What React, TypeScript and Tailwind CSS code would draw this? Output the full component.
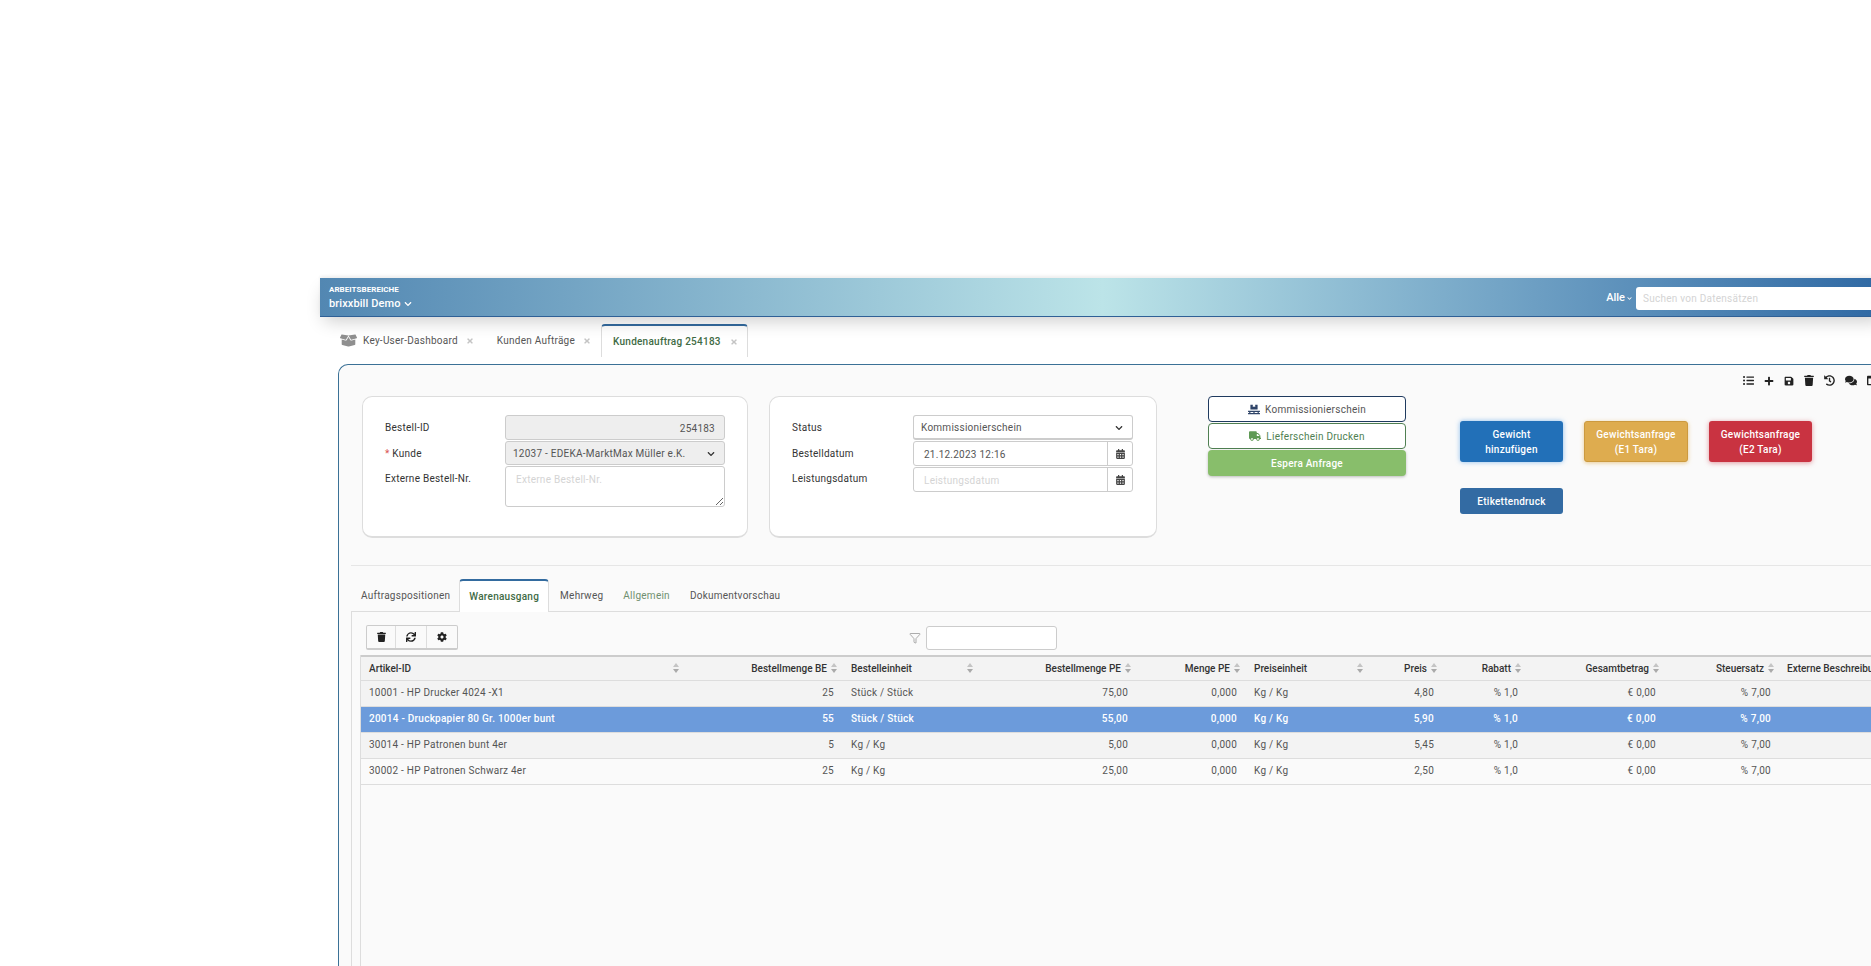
import React from 'react';
import { FaBoxOpen, FaCalendarAlt, FaChevronDown, FaCog, FaColumns, FaComments, FaHistory, FaListUl, FaPallet, FaPlus, FaSave, FaSync, FaTimes, FaTrash, FaTruck } from 'react-icons/fa';
import { Filter } from 'lucide-react';

const columns = [
  { label: 'Artikel-ID', width: 'w-[325px]', right: false },
  { label: 'Bestellmenge BE', width: 'w-[157px]', right: true },
  { label: 'Bestelleinheit', width: 'w-[137px]', right: false },
  { label: 'Bestellmenge PE', width: 'w-[157px]', right: true },
  { label: 'Menge PE', width: 'w-[109px]', right: true },
  { label: 'Preiseinheit', width: 'w-[124px]', right: false },
  { label: 'Preis', width: 'w-[73px]', right: true },
  { label: 'Rabatt', width: 'w-[84px]', right: true },
  { label: 'Gesamtbetrag', width: 'w-[138px]', right: true },
  { label: 'Steuersatz', width: 'w-[115px]', right: true },
];

const rows = [
  ['10001 - HP Drucker 4024 -X1', '25', 'Stück / Stück', '75,00', '0,000', 'Kg / Kg', '4,80', '% 1,0', '€ 0,00', '% 7,00'],
  ['20014 - Druckpapier 80 Gr. 1000er bunt', '55', 'Stück / Stück', '55,00', '0,000', 'Kg / Kg', '5,90', '% 1,0', '€ 0,00', '% 7,00'],
  ['30014 - HP Patronen bunt 4er', '5', 'Kg / Kg', '5,00', '0,000', 'Kg / Kg', '5,45', '% 1,0', '€ 0,00', '% 7,00'],
  ['30002 - HP Patronen Schwarz 4er', '25', 'Kg / Kg', '25,00', '0,000', 'Kg / Kg', '2,50', '% 1,0', '€ 0,00', '% 7,00'],
];

const rowStyles = [
  'bg-[#f3f3f3] text-[#555555]',
  'bg-[#6c9bdb] text-white font-medium',
  'bg-[#f3f3f3] text-[#555555]',
  'bg-[#fafafa] text-[#555555]',
];

function SortIcon() {
  return (
    <svg className="w-[6px] h-[10px] shrink-0" viewBox="0 0 6 10">
      <path d="M3 0L6 4H0z" fill="#c4c4c4" />
      <path d="M3 10L6 6H0z" fill="#aaaaaa" />
    </svg>
  );
}

function CloseX() {
  return <FaTimes className="w-[8px] h-[8px] text-[#c4c4c4]" />;
}

function Label({ children }: { children: React.ReactNode }) {
  return <div className="h-[25.5px] leading-[26px] text-[#333333]">{children}</div>;
}

export default function App() {
  return (
    <div className="h-[966px] w-full overflow-hidden bg-white pt-[278px] pl-[320px] text-[10px] tracking-[0.25px] [font-family:Roboto,sans-serif]">
      <div className="w-[1566px]">
        {/* top bar */}
        <header className="relative z-10 h-[39px] pt-[1px] flex items-center justify-between pl-[9px] border-b border-[#2f6096] text-white bg-gradient-to-r from-[#5287b2] via-[#bce4e8] to-[#2e68a3] shadow-[0_8px_18px_-4px_rgba(0,0,0,0.2),0_-2px_3px_rgba(0,0,0,0.06)]">
          <div>
            <div className="text-[8px] leading-[11px] font-bold tracking-[0.05px]">ARBEITSBEREICHE</div>
            <div className="flex items-center gap-[3px] mt-[1px] text-[11px] leading-[16px] font-medium tracking-[0.1px]">
              brixxbill Demo <FaChevronDown className="w-[8px] h-[8px]" />
            </div>
          </div>
          <div className="flex items-center mt-[2px]">
            <span className="text-[11px] font-medium tracking-normal">Alle</span>
            <FaChevronDown className="w-[5px] h-[5px] ml-[2px] mr-[4px]" />
            <div className="w-[250px] h-[23px] bg-white rounded-l-[3px] pl-[7px] leading-[23px] text-[#d4d4d4]">Suchen von Datensätzen</div>
          </div>
        </header>

        {/* open tabs */}
        <div className="h-[47px] pt-[7px] pl-[20px] flex items-start">
          <div className="h-[33px] flex items-center text-[#555555]">
            <FaBoxOpen className="w-[17px] h-[15px] text-[#8f8f8f] mr-[6px]" />
            <span>Key-User-Dashboard</span>
            <span className="ml-[8px]"><CloseX /></span>
          </div>
          <div className="h-[33px] ml-[23px] flex items-center text-[#555555]">
            <span>Kunden Aufträge</span>
            <span className="ml-[8px]"><CloseX /></span>
          </div>
          <div className="h-[33px] ml-[10px] pl-[11px] pr-[9px] flex items-center bg-white border-x border-[#dddddd] border-t-2 border-t-[#336b9f] rounded-t-[4px] font-medium text-[#3f6b45]">
            <span>Kundenauftrag 254183</span>
            <span className="ml-[9px]"><CloseX /></span>
          </div>
        </div>

        {/* main panel */}
        <main className="ml-[18px] h-[602px] bg-[#fafafa] border-l border-t border-[#3b7196] rounded-tl-[10px]">
          <div className="h-[31px] flex items-center justify-end gap-[10px] pr-[8px] text-[#222222]">
            <FaListUl className="w-[11px] h-[11px]" />
            <FaPlus className="w-[10px] h-[10px]" />
            <FaSave className="w-[10px] h-[10px]" />
            <FaTrash className="w-[10px] h-[11px]" />
            <FaHistory className="w-[11px] h-[11px]" />
            <FaComments className="w-[12px] h-[11px]" />
            <FaColumns className="w-[11px] h-[11px]" />
          </div>

          <section className="flex items-start pl-[23px]">
            <div className="w-[386px] h-[142px] shrink-0 bg-white border border-[#dddddd] border-b-2 rounded-[10px] pt-[18px] pl-[22px] flex">
              <div className="w-[120px]">
                <Label>Bestell-ID</Label>
                <Label><span className="text-[#d9534f]">*</span> Kunde</Label>
                <Label>Externe Bestell-Nr.</Label>
              </div>
              <div className="w-[220px] flex flex-col gap-[1px] text-[#555555]">
                <div className="h-[25px] bg-[#eeeeee] border border-[#cccccc] rounded-[3px] text-right pr-[9px] leading-[25px]">254183</div>
                <div className="h-[24px] bg-[#eeeeee] border border-[#cccccc] rounded-[3px] pl-[7px] pr-[9px] pt-[1px] flex items-center justify-between">
                  12037 - EDEKA-MarktMax Müller e.K.
                  <FaChevronDown className="w-[8px] h-[8px] text-[#333333]" />
                </div>
                <textarea placeholder="Externe Bestell-Nr." className="h-[41px] bg-white border border-[#cccccc] rounded-[3px] pl-[10px] pt-[5px] outline-none placeholder:text-[#d4d4d4]" />
              </div>
            </div>

            <div className="w-[388px] h-[142px] shrink-0 ml-[21px] bg-white border border-[#dddddd] border-b-2 rounded-[10px] pt-[18px] pl-[22px] flex">
              <div className="w-[121px]">
                <Label>Status</Label>
                <Label>Bestelldatum</Label>
                <Label>Leistungsdatum</Label>
              </div>
              <div className="w-[220px] flex flex-col gap-[1px] text-[#555555]">
                <div className="h-[25px] border border-[#cccccc] border-b-2 rounded-[3px] pl-[7px] pr-[9px] pt-[1px] flex items-center justify-between">
                  Kommissionierschein
                  <FaChevronDown className="w-[8px] h-[8px] text-[#333333]" />
                </div>
                <div className="h-[25px] border border-[#cccccc] rounded-[3px] pl-[10px] flex items-center justify-between">
                  <span className="pt-[1px]">21.12.2023 12:16</span>
                  <div className="w-[25px] h-full border-l border-[#cccccc] flex items-center justify-center">
                    <FaCalendarAlt className="w-[9px] h-[10px] text-[#444444]" />
                  </div>
                </div>
                <div className="h-[25px] border border-[#cccccc] rounded-[3px] pl-[10px] flex items-center justify-between text-[#d4d4d4]">
                  <span className="pt-[1px]">Leistungsdatum</span>
                  <div className="w-[25px] h-full border-l border-[#cccccc] flex items-center justify-center">
                    <FaCalendarAlt className="w-[9px] h-[10px] text-[#444444]" />
                  </div>
                </div>
              </div>
            </div>

            <div className="w-[198px] shrink-0 ml-[51px] flex flex-col gap-[1px]">
              <button className="h-[26px] flex items-center justify-center gap-[5px] bg-white border border-[#1f3a5f] rounded-[4px] text-[#555555]">
                <FaPallet className="w-[12px] h-[11px] text-[#2f4468]" /> Kommissionierschein
              </button>
              <button className="h-[26px] flex items-center justify-center gap-[5px] bg-white border border-[#4f7f52] rounded-[4px] text-[#4f7f52]">
                <FaTruck className="w-[12px] h-[10px] text-[#5f9a55]" /> Lieferschein Drucken
              </button>
              <button className="h-[26px] bg-[#88be6b] rounded-[4px] text-white font-medium shadow-[0_1px_3px_rgba(0,0,0,0.25)]">Espera Anfrage</button>
            </div>

            <div className="ml-[54px] mt-[25px] shrink-0 grid grid-cols-[103px_104px_103px] gap-x-[21px] gap-y-[26px] text-white font-medium leading-[15px]">
              <button className="h-[41px] bg-[#2270b8] rounded-[3px] shadow-[0_0_5px_rgba(66,150,230,0.6)]">Gewicht<br />hinzufügen</button>
              <button className="h-[41px] bg-[#deac4f] border border-[#cc9a3f] rounded-[3px] shadow-[0_1px_4px_rgba(222,172,79,0.6)]">Gewichtsanfrage<br />(E1 Tara)</button>
              <button className="h-[41px] bg-[#c93341] rounded-[3px] shadow-[0_1px_5px_rgba(201,51,65,0.5)]">Gewichtsanfrage<br />(E2 Tara)</button>
              <button className="h-[26px] bg-[#336ba3] rounded-[3px]">Etikettendruck</button>
            </div>
          </section>

          <div className="mt-[27px] ml-[12px] border-t border-[#e6e6e6]" />

          {/* inner tabs */}
          <nav className="mt-[13px] ml-[12px] h-[33px] flex relative z-[1] text-[#555555]">
            <div className="pl-[10px] pr-[9px] leading-[33px]">Auftragspositionen</div>
            <div className="h-[33px] px-[9px] leading-[31px] bg-[#ffffff] border-x border-[#dddddd] border-t-2 border-t-[#336b9f] rounded-t-[4px] font-medium text-[#3f6b45]">Warenausgang</div>
            <div className="pl-[11px] pr-[10px] leading-[33px]">Mehrweg</div>
            <div className="px-[10px] leading-[33px] text-[#6f8f6f]">Allgemein</div>
            <div className="px-[10px] leading-[33px]">Dokumentvorschau</div>
          </nav>

          <div className="ml-[12px] -mt-[1px] h-[400px] border-l border-t border-[#dddddd] pt-[13px] pl-[8px]">
            <div className="flex items-center h-[25px] pl-[6px]">
              <div className="flex h-[25px] bg-[#fafafa] border border-[#cccccc] border-b-2 rounded-[2px] text-[#222222]">
                <div className="w-[29px] flex items-center justify-center border-r border-[#dddddd]"><FaTrash className="w-[9px] h-[10px]" /></div>
                <div className="w-[31px] flex items-center justify-center border-r border-[#dddddd]"><FaSync className="w-[10px] h-[10px]" /></div>
                <div className="w-[30px] flex items-center justify-center"><FaCog className="w-[10px] h-[10px]" /></div>
              </div>
              <Filter className="w-[12px] h-[12px] ml-[451px] text-[#777777]" strokeWidth={1.2} />
              <div className="w-[131px] h-[24px] ml-[5px] bg-white border border-[#cccccc] rounded-[3px]" />
            </div>

            <div className="mt-[5px] border-l border-[#dddddd] h-[360px]">
              <table className="table-fixed w-[1619px] border-collapse">
                <colgroup>
                  {columns.map((c) => <col key={c.label} className={c.width} />)}
                  <col className="w-[200px]" />
                </colgroup>
                <thead>
                  <tr className="h-[24px] bg-[#f3f3f3] border-t-2 border-b border-t-[#cccccc] border-b-[#dddddd] text-[#333333] tracking-normal">
                    {columns.map((c) => (
                      <th key={c.label} className="p-0 font-medium">
                        <div className={c.right ? 'flex items-center justify-end gap-[4px] pr-[6px]' : 'flex items-center justify-between pl-[8px] pr-[7px]'}>
                          <span>{c.label}</span>
                          <SortIcon />
                        </div>
                      </th>
                    ))}
                    <th className="p-0 pl-[7px] font-medium text-left whitespace-nowrap">Externe Beschreibung</th>
                  </tr>
                </thead>
                <tbody>
                  {rows.map((row, i) => (
                    <tr key={row[0]} className={`h-[26px] border-b border-[#dddddd] ${rowStyles[i]}`}>
                      {row.map((cell, j) => (
                        <td key={j} className={columns[j].right ? 'p-0 pr-[9px] pb-[1px] text-right' : 'p-0 pl-[8px] pb-[1px]'}>{cell}</td>
                      ))}
                      <td className="p-0" />
                    </tr>
                  ))}
                </tbody>
              </table>
            </div>
          </div>
        </main>
      </div>
    </div>
  );
}
